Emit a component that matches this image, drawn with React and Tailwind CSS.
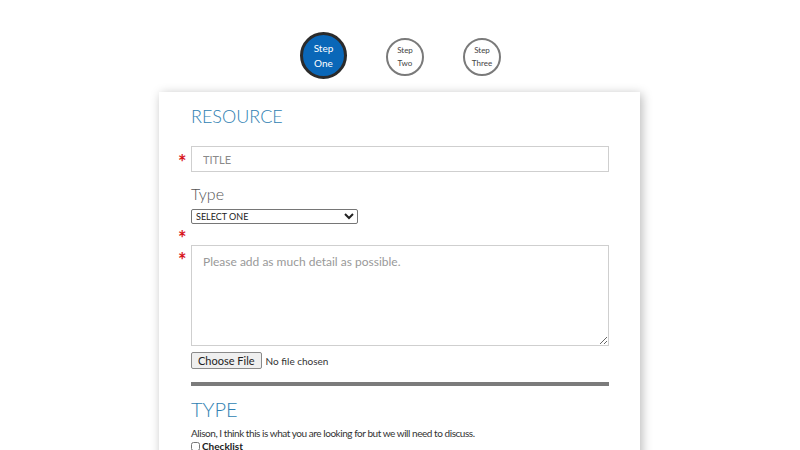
const font = { fontFamily: '"Lato", "Open Sans", sans-serif' };

function StepCircle({ top, bottom, active }) {
  if (active) {
    return (
      <div className="flex h-[47px] w-[47px] flex-col items-center justify-center rounded-full border-[3px] border-[#2b2b2b] bg-[#0a67b8] text-[10px] leading-[15px] text-white">
        <span>{top}</span>
        <span>{bottom}</span>
      </div>
    );
  }
  return (
    <div className="mt-[6px] flex h-[38px] w-[38px] flex-col items-center justify-center rounded-full border-2 border-[#7a7a7a] bg-white text-[8px] leading-[13px] text-[#444]">
      <span>{top}</span>
      <span>{bottom}</span>
    </div>
  );
}

function Star({ top = '0px' }) {
  return (
    <span className="absolute left-[-13px] text-[20px] font-bold leading-[20px] text-[#d8141c]" style={{ top }}>
      *
    </span>
  );
}

export default function App() {
  return (
    <div className="h-[450px] w-[800px] overflow-hidden bg-white" style={font}>
      {/* step indicator */}
      <div className="flex justify-center gap-[39px] pl-[1px] pt-[32px]">
        <StepCircle top="Step" bottom="One" active />
        <StepCircle top="Step" bottom="Two" />
        <StepCircle top="Step" bottom="Three" />
      </div>

      <div className="ml-[159px] mt-[13px] h-[400px] w-[481px] bg-white px-[32px] pt-[13px] shadow-[2px_2px_10px_rgba(0,0,0,0.28)]">
        <h2 className="text-[18px] font-light leading-[22px] text-[#2f7fb2]">RESOURCE</h2>

        <div className="relative mt-[19px]">
          <Star top="6px" />
          <input
            type="text"
            placeholder="TITLE"
            className="block h-[26px] w-[418px] border border-[#cfcfcf] px-[11px] text-[11px] placeholder:text-[#8a8a8a]"
          />
        </div>

        <div className="mt-[12px] text-[16px] font-light leading-[20px] text-[#555]">Type</div>
        <select className="mt-[5px] block h-[15px] w-[167px] rounded-[2px] border border-[#767676] text-[9px] leading-[12px] text-[#222]">
          <option>SELECT ONE</option>
        </select>

        <div className="relative h-[21px]">
          <Star top="4px" />
        </div>

        <div className="relative">
          <Star top="5px" />
          <textarea
            placeholder="Please add as much detail as possible."
            className="block h-[101px] w-[418px] border border-[#cfcfcf] px-[11px] py-[7px] text-[12px] placeholder:text-[#999]"
          />
        </div>

        <input
          type="file"
          className="mt-[6px] block text-[10px] text-[#333] file:mr-[4px] file:h-[17px] file:rounded-[2px] file:border file:border-[#8a8a8a] file:bg-[#efefef] file:px-[6px] file:text-[11px] file:text-[#222]"
        />

        <div className="mt-[13px] h-[4px] w-[418px] bg-[#7b7b7b]" />

        <h2 className="mt-[12px] text-[20px] font-light leading-[22px] text-[#2f7fb2]">TYPE</h2>
        <p className="mt-[7px] text-[10px] leading-[13px] tracking-[-0.45px] text-[#333]">
          Alison, I think this is what you are looking for but we will need to discuss.
        </p>
        <label className="flex items-center gap-[2px] text-[10px] font-bold leading-[13px] text-[#222]">
          <input type="checkbox" className="h-[9px] w-[9px]" />
          Checklist
        </label>
      </div>
    </div>
  );
}
